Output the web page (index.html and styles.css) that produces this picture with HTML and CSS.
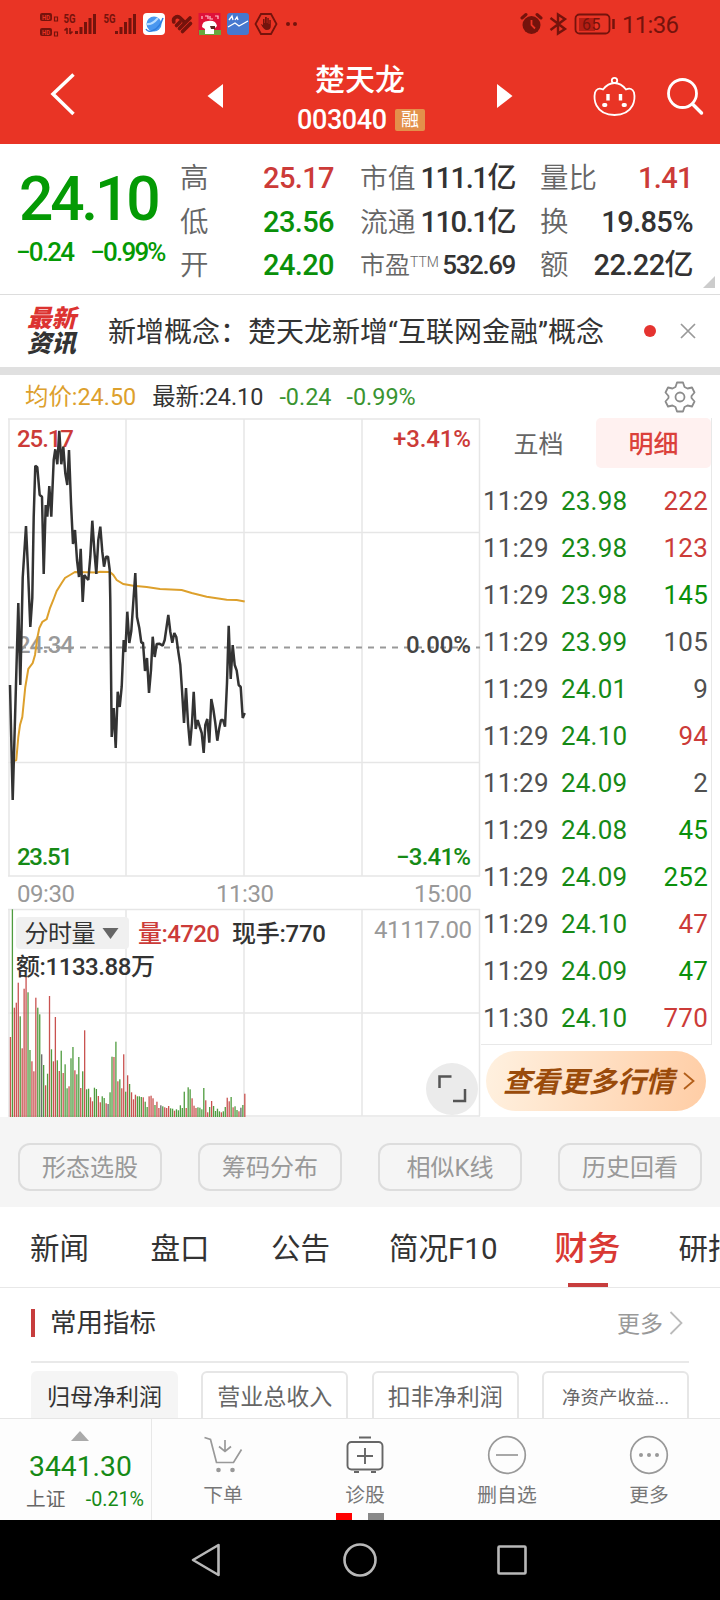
FILE: index.html
```
<!DOCTYPE html>
<html lang="zh-CN">
<head>
  <meta charset="UTF-8">
  <meta name="viewport" content="width=device-width, initial-scale=1.0">
  <title>楚天龙 003040</title>
  <link rel="stylesheet" href="styles.css">
</head>
<body>
  <header class="top">
    <div class="status">
      <svg width="310" height="48" viewBox="0 0 310 48" fill="#75130c">
        <g>
          <rect x="40" y="13" width="12" height="8" rx="2"/>
          <rect x="40" y="28" width="12" height="8" rx="2"/>
        </g>
        <path d="M54.500 17h3v4h-3zM54.500 32h3v4h-3z" fill="none" stroke="#75130c" stroke-width="1.200"/>
        <text x="42" y="19.500" class="hd" textLength="8" lengthAdjust="spacingAndGlyphs">HD</text>
        <text x="42" y="34.500" class="hd" textLength="8" lengthAdjust="spacingAndGlyphs">HD</text>
        <text x="63.500" y="23" class="net" textLength="12" lengthAdjust="spacingAndGlyphs">5G</text>
        <text x="103.500" y="23" class="net" textLength="12" lengthAdjust="spacingAndGlyphs">5G</text>
        <path d="M67 28v6M64.500 30.500l2.500-2.500M70 28v6M70 34l2.500-2.500" stroke="#75130c" stroke-width="1.600"/>
        <path d="M75 31h3v3h-3zM79.500 27h3v7h-3zM84 22h3v12h-3zM88.500 18h3v16h-3zM93 14h3v20h-3z"/>
        <path d="M115 31h3v3h-3zM119.500 27h3v7h-3zM124 22h3v12h-3zM128.500 18h3v16h-3zM133 14h3v20h-3z"/>
        <rect x="143" y="13" width="22" height="22" rx="4" fill="#fff"/>
        <circle cx="154" cy="24" r="7.500" fill="#4a97ef"/>
        <path d="M146 29q2 4 8 1t9-12" fill="none" stroke="#2e7ddf" stroke-width="1.500"/>
        <path d="M147 24q5 1 11-6" fill="none" stroke="#b5dcff" stroke-width="2"/>
        <g fill="none" stroke="#75130c" stroke-width="3.600" stroke-linecap="round">
          <path d="M173.800 22q-1-3.500 2-5 2.500-1 4.500 1l4.500 4.500"/>
          <path d="M176.500 25.500l3.500-3.500M179.500 28.500l10.500-10.500M182.500 31.500l8-8"/>
        </g>
        <rect x="198.500" y="13" width="22" height="22" fill="#df1239"/>
        <path d="M199 30h22v5h-22z" fill="#67a83d"/>
        <path d="M202 16v3M205 16h3v3M210 16v3h3M215 16h3v3" fill="none" stroke="#ffc4cf" stroke-width="1.200"/>
        <path d="M202 27q0-6 6-6 8-1 9 5l-3 3v5h-9v-5z" fill="#fff"/>
        <path d="M210 26h5v3h-4z" fill="#5b2622"/>
        <rect x="227" y="13" width="22" height="22" rx="3" fill="#4678cf"/>
        <path d="M228 27l7-4 4 3 9-5" fill="none" stroke="#fff" stroke-width="1.300"/>
        <path d="M229 20l3-4 1 4M235 20l2-3 1 3" fill="none" stroke="#fff" stroke-width="1.300"/>
        <path d="M261 14h10l5.500 10-5.500 10h-10l-5.500-10z" fill="none" stroke="#75130c" stroke-width="1.800"/>
        <path d="M261 24l2 1v-6h1.500v4h.500v-6h1.800v6h.500v-5h1.500v6h.500v-4h1.500v6q0 4-4 4-3 0-6-6z"/>
        <circle cx="288" cy="24" r="2"/><circle cx="295" cy="24" r="2"/>
      </svg>
      <svg width="200" height="48" viewBox="520 0 200 48" fill="#75130c">
        <circle cx="531.500" cy="25" r="9"/>
        <path d="M522 18l4-3.500M537 14.500l4 3.500" stroke="#75130c" stroke-width="3" stroke-linecap="round"/>
        <path d="M531.500 20v5l3.500 3.500" fill="none" stroke="#e93425" stroke-width="1.800"/>
        <path d="M550.500 18l14.500 11-7 4.500V14.500l7 4.500-14.500 11" fill="none" stroke="#75130c" stroke-width="2.400"/>
        <rect x="579" y="18" width="16" height="13" fill="#b51e14"/>
        <rect x="575.500" y="14.500" width="34" height="19" rx="4" fill="none" stroke="#75130c" stroke-width="1.800"/>
        <path d="M613.500 19v10" stroke="#75130c" stroke-width="2.500"/>
        <text x="582" y="29.500" class="batt">65</text>
        <text x="622" y="33" class="clock" textLength="57">11:36</text>
      </svg>
    </div>
    <div class="titlebar">
      <svg class="tb-left" width="270" height="96" viewBox="0 48 270 96">
        <path d="M73.500 74.500L53 94l20.500 20" fill="none" stroke="#fff" stroke-width="3.500"/>
        <path d="M223 84v24l-15.500-12z" fill="#fff"/>
      </svg>
      <div class="stock">
        <div class="stock-name">楚天龙</div>
        <div class="stock-code"><span>003040</span><span class="tag">融</span></div>
      </div>
      <svg class="tb-right" width="270" height="96" viewBox="450 48 270 96">
        <path d="M497 84v24l15.500-12z" fill="#fff"/>
        <g fill="none" stroke="#fff" stroke-width="1.800">
          <circle cx="614.500" cy="80.500" r="2.700"/>
          <path d="M603 89.500q5-6.500 11.500-6.500t11.500 6.500q6-2.500 8 3 1.500 7-1.500 13-5 9.500-18 9.500t-18-9.500q-3-6-1.500-13 2-5.500 8-3z"/>
        </g>
        <path d="M608 94v6.500M620.500 94v6.500" stroke="#fff" stroke-width="3.400"/>
        <path d="M604 105h1.500M623.500 105h1.500" stroke="#fff" stroke-width="3.800" stroke-linecap="round"/>
        <circle cx="682.500" cy="93.500" r="14" fill="none" stroke="#fff" stroke-width="2.800"/>
        <path d="M692.500 104l9 9" stroke="#fff" stroke-width="3.500" stroke-linecap="round"/>
      </svg>
    </div>
  </header>

  <section class="quote">
    <div class="now">
      <div class="price">24.10</div>
      <div class="change"><span>−0.24</span><span>−0.99%</span></div>
    </div>
    <dl class="facts col-a">
      <dt>高</dt><dd class="up">25.17</dd>
      <dt>低</dt><dd class="down">23.56</dd>
      <dt>开</dt><dd class="down">24.20</dd>
    </dl>
    <dl class="facts col-b">
      <dt>市值</dt><dd>111.1亿</dd>
      <dt>流通</dt><dd>110.1亿</dd>
      <dt class="pe">市盈<sup>TTM</sup></dt><dd class="pe">532.69</dd>
    </dl>
    <dl class="facts col-c">
      <dt>量比</dt><dd class="up">1.41</dd>
      <dt>换</dt><dd>19.85%</dd>
      <dt>额</dt><dd>22.22亿</dd>
    </dl>
    <i class="corner"></i>
  </section>

  <section class="news">
    <div class="news-logo"><b>最新</b><b>资讯</b></div>
    <p>新增概念：楚天龙新增“互联网金融”概念</p>
    <i class="dot"></i>
    <svg width="16" height="16" viewBox="0 0 16 16"><path d="M1 1l14 14M15 1L1 15" stroke="#999" stroke-width="1.700"/></svg>
  </section>

  <div class="legend">
    <span class="avg">均价:24.50</span>
    <span>最新:24.10</span>
    <span class="dn">-0.24</span>
    <span class="dn">-0.99%</span>
    <svg width="32" height="32" viewBox="-16 -16 32 32" fill="none" stroke="#8c8c8c" stroke-width="1.800" stroke-linejoin="round">
      <path d="M-3-14.500h6l1.500 4.500 3 1.500 4.500-1 2.500 5-3 3.500v2l3 3.500-2.500 5-4.500-1-3 1.500-1.500 4.500h-6l-1.500-4.500-3-1.500-4.500 1-2.500-5 3-3.500v-2l-3-3.500 2.500-5 4.500 1 3-1.500z"/>
      <circle r="4.500"/>
    </svg>
  </div>

  <main class="market">
    <div class="chart">
      <svg width="481" height="699" viewBox="0 0 481 699">
        <g stroke="#e6e6e6" stroke-width="1.500" fill="none">
          <path d="M8 1h472M8 114.500h472M8 344.500h472M8 458h472M8 491.500h472M8 595h472M8 698h472"/>
          <path d="M9 1v457M126 1v457M244 1v457M362 1v457M479.500 1v457M9 491v207M126 491v207M244 491v207M362 491v207M479.500 491v207"/>
        </g>
        <path d="M8 229.500h472" stroke="#999" stroke-width="1.800" stroke-dasharray="6 6"/>
        <g class="din">
          <text x="17" y="28.500" fill="#cc3b38" textLength="57">25.17</text>
          <text x="17" y="235" fill="#999" textLength="57">24.34</text>
          <text x="17" y="447" fill="#168a16" textLength="56">23.51</text>
          <text x="393" y="28.500" fill="#cc3b38" textLength="78">+3.41%</text>
          <text x="406" y="235" fill="#444" textLength="65">0.00%</text>
          <text x="396" y="447" fill="#168a16" textLength="75">−3.41%</text>
          <g class="axis">
            <text x="17" y="484" textLength="58">09:30</text>
            <text x="216" y="484" textLength="58">11:30</text>
            <text x="414" y="484" textLength="58">15:00</text>
            <text x="374" y="520" textLength="98">41117.00</text>
          </g>
        </g>
        <g id="bars"></g>
        <polyline fill="none" stroke="#dda02c" stroke-width="2" points="15,343 16.300,342 18.300,319 20,307 22.300,299 25.300,269 28.300,251 32.700,245 35,237 37.300,220 39.300,210 42.300,204 46.700,201 50,190 53.300,182 56.700,173 61.700,165 65,160 70,157 75,154 97,154.500 100,153.700 110,154 113.300,157 116.700,162 123.300,166 133.300,167.700 146.700,169 160,171 181.700,172 191.700,175 206.700,178.700 226.700,181.700 236.700,182 244.700,183.500"/>
        <polyline fill="none" stroke="#333" stroke-width="2.500" stroke-linejoin="bevel" points="10,267 12.700,382 18.300,185 20.300,267 22.700,160 26,108 28,152 30.300,209 32.300,180 33.700,99 35.300,47.700 37.300,49.300 39.700,77 42,78.700 43.700,156 45.700,87 47.300,98.700 49.300,68 51.300,98.700 53.700,42 55.300,31.300 57.300,46.300 59.300,12.700 61.300,46.300 63.300,28.700 65.300,55.300 67.300,67 69,32 71,85 73,126 75,112 77,142 79,159 80.700,130.700 82.700,184 84.300,157 86,159.300 88.300,162 90.300,138.700 92.300,102.700 94.300,132 96.300,156 98.300,122 100.300,108.700 102.300,133.700 104,148.700 106,138.700 108,138.700 109.700,152 110.300,182 111.700,319 113.700,290 115.700,330 117.700,273.700 119.700,289 121.700,268.700 123.700,222 125.300,234 127.300,193.700 129.300,225 131.300,213 135.300,155 137,199 139.300,210 141.300,224.700 143,224.700 145,253 147,240 149,275 151,252 152.700,218.700 154.700,239 156.700,226 159.300,225.700 162.700,227.700 164.700,222 168.300,197 170.300,213.700 172.300,224.700 174.300,215 176.300,219 178.300,233.700 180.300,247 182,272 184,305 186,270 188,305 190,327.700 192,305 193.700,273.700 195.700,311 197.700,302 199.700,308.700 201.700,315 203.700,335 205.300,307 207.300,301 209.300,324.700 211.300,281 213.300,291 215.300,305 217.300,322.700 219.300,310 221,302 223,302 225,308.700 227,265 228.700,207.700 230.700,261 232.700,227 234.700,247 236.700,252.700 238.700,267 240.700,269 242.700,300 244.700,295"/>
        <rect x="16" y="499" width="113" height="32" rx="4" fill="#f0f0f0"/>
        <path d="M102.500 510h16l-8 11z" fill="#666"/>
        <g class="din">
          <text x="24.500" y="524" fill="#333" class="plain" textLength="71">分时量</text>
          <text x="138" y="524" fill="#cc3b38" textLength="82">量:4720</text>
          <text x="232" y="524" fill="#333" textLength="94">现手:770</text>
          <text x="16" y="557" fill="#333" textLength="139">额:1133.88万</text>
        </g>
        <circle cx="452" cy="671" r="26" fill="#ebebeb"/>
        <path d="M439.500 670v-11.500h12M453 683h12v-12" fill="none" stroke="#555" stroke-width="2.500"/>
      </svg>
    </div>

    <aside class="side">
      <div class="ticks">
        <div class="side-tabs"><span>五档</span><span class="on">明细</span></div>
        <div id="tickList"></div>
      </div>
      <div class="more-quote"><span>查看更多行情</span><svg width="12" height="18" viewBox="0 0 12 18"><path d="M1 1l9.500 8L1 17" fill="none" stroke="#b35f1a" stroke-width="1.800"/></svg></div>
    </aside>
  </main>

  <div class="tools">
    <button>形态选股</button>
    <button>筹码分布</button>
    <button>相似K线</button>
    <button>历史回看</button>
  </div>

  <nav class="tabs">
    <span>新闻</span><span>盘口</span><span>公告</span><span>简况F10</span><span class="on">财务</span><span>研报</span>
  </nav>

  <section class="finance">
    <div class="fin-head">
      <h2>常用指标</h2>
      <span>更多</span>
      <svg width="14" height="24" viewBox="0 0 14 24"><path d="M1.500 1l11 11-11 11" fill="none" stroke="#bbb" stroke-width="1.800"/></svg>
    </div>
    <div class="chips">
      <span class="on">归母净利润</span><span>营业总收入</span><span>扣非净利润</span><span class="small">净资产收益...</span>
    </div>
  </section>

  <footer class="dock">
    <div class="index">
      <i class="caret"></i>
      <div class="index-value">3441.30</div>
      <div class="index-row"><span>上证</span><span class="pct">-0.21%</span></div>
    </div>
    <div class="action">
      <svg width="42" height="42" viewBox="-21 -21 42 42" fill="none" stroke="#999" stroke-width="1.700">
        <path d="M-18.500-17.500l6 2 6 23h17l8-13M2-15v12M-4-8.500l6 5 6-5"/>
        <g fill="#999" stroke="none"><circle cx="-4.500" cy="15" r="2.300"/><circle cx="9.500" cy="15" r="2.300"/></g>
      </svg>
      <span>下单</span>
    </div>
    <div class="action">
      <svg width="42" height="42" viewBox="-21 -21 42 42" fill="none" stroke="#666" stroke-width="1.900">
        <rect x="-17.500" y="-13" width="35" height="27.500" rx="4"/>
        <path d="M-6-17.500h12M0-7v16M-8 1h16M-11 17h5M6 17h5"/>
      </svg>
      <span>诊股</span>
    </div>
    <div class="action">
      <svg width="42" height="42" viewBox="-21 -21 42 42" fill="none" stroke="#999" stroke-width="1.700">
        <circle r="18.300"/><path d="M-11 0h22"/>
      </svg>
      <span>删自选</span>
    </div>
    <div class="action">
      <svg width="42" height="42" viewBox="-21 -21 42 42" fill="none" stroke="#999" stroke-width="1.700">
        <circle r="18.300"/>
        <g fill="#999" stroke="none"><circle cx="-8" r="2"/><circle r="2"/><circle cx="8" r="2"/></g>
      </svg>
      <span>更多</span>
    </div>
    <div class="pager"><i class="cur"></i><i></i></div>
  </footer>

  <div class="sysnav">
    <svg width="720" height="80" viewBox="0 0 720 80" fill="none" stroke="#b8b8b8" stroke-width="2.600" stroke-linejoin="round">
      <path d="M218.500 25v30L193 40z"/>
      <circle cx="360" cy="40" r="15.500"/>
      <rect x="498.500" y="26.500" width="27" height="27" rx="1"/>
    </svg>
  </div>

  <script src="script.js"></script>
</body>
</html>
```

FILE: styles.css
```
* {
  box-sizing: border-box;
}
body {
  margin: 0;
  width: 720px;
  height: 1600px;
  overflow: hidden;
  background: #fff;
  color: #333;
  font-family: Roboto, "Noto Sans CJK SC", sans-serif;
}
svg {
  display: block;
}
i {
  display: block;
}

/* header */
.top {
  height: 144px;
  background: #e93425;
  color: #fff;
}
.status {
  display: flex;
  justify-content: space-between;
  height: 48px;
}
.hd {
  fill: #e93425;
  font-size: 7px;
  font-weight: 700;
}
.net {
  font-size: 13px;
  font-weight: 700;
}
.batt {
  font-size: 16px;
  letter-spacing: 0.6px;
}
.clock {
  font-size: 24px;
}
.titlebar {
  display: flex;
  height: 96px;
}
.stock {
  width: 180px;
  padding-top: 14px;
  text-align: center;
}
.stock-name {
  font-size: 30px;
  line-height: 36px;
  font-weight: 500;
}
.stock-code {
  display: flex;
  align-items: center;
  height: 22px;
  margin-top: 11px;
  padding-left: 27px;
  font-size: 27px;
  font-weight: 500;
  letter-spacing: -0.4px;
}
.tag {
  width: 30px;
  height: 22px;
  margin-left: 8px;
  border-radius: 2px;
  background: #e3904b;
  font-size: 18px;
  line-height: 22px;
  font-weight: 400;
}

/* quote */
.quote {
  position: relative;
  display: flex;
  height: 151px;
  border-bottom: 1.5px solid #ddd;
}
.up {
  color: #cc3b38 !important;
}
.down {
  color: #0a900a !important;
}
.now {
  width: 180px;
  padding-left: 19px;
  color: #049a04;
}
.price {
  margin-top: 20px;
  font-size: 60.5px;
  line-height: 72px;
  font-weight: 500;
  letter-spacing: -3.2px;
}
.change {
  display: flex;
  gap: 17px;
  margin: 1px 0 0 -3px;
  font-size: 26px;
  line-height: 30px;
  font-weight: 500;
  letter-spacing: -1.8px;
  white-space: nowrap;
}
/* the label column has no width of its own, labels run out under the values */
.facts {
  display: grid;
  grid-template-columns: 0 1fr;
  grid-auto-rows: 43.5px;
  margin: 13px 0 0;
  line-height: 43.5px;
  white-space: nowrap;
}
.facts dt {
  color: #666;
  font-size: 28.5px;
  font-weight: 350;
}
.facts dd {
  margin: 0;
  text-align: right;
  color: #333;
  font-size: 29px;
  font-weight: 500;
  letter-spacing: -0.6px;
}
.col-a {
  width: 154px;
  margin-right: 26px;
}
.col-b {
  width: 155px;
  margin-right: 25px;
}
.col-b dt {
  font-size: 27.8px;
}
.facts.col-b dd {
  letter-spacing: -1.4px;
}
.col-c {
  width: 153px;
}
.facts dt.pe {
  font-size: 25px;
}
.facts dd.pe {
  font-size: 26px;
}
.pe sup {
  font-size: 14px;
  line-height: 0;
  vertical-align: 7px;
}
.corner {
  position: absolute;
  right: 5px;
  bottom: 6px;
  border-left: 12px solid transparent;
  border-bottom: 12px solid #ccc;
}

/* news */
.news {
  display: flex;
  align-items: center;
  height: 80px;
  padding: 0 24px 0 27px;
  border-bottom: 8px solid #e0e0e0;
}
.news-logo {
  width: 81px;
  color: #333;
}
.news-logo b {
  display: block;
  font-size: 24.5px;
  line-height: 25px;
  font-weight: 900;
  font-style: italic;
}
.news-logo b:first-child {
  color: #dc3331;
}
.news p {
  flex: 1;
  margin: 4px 0 0;
  font-size: 28px;
  line-height: 40px;
  white-space: nowrap;
}
.dot {
  width: 12px;
  height: 12px;
  margin-right: 24px;
  border-radius: 50%;
  background: #e53330;
}

/* chart */
.legend {
  display: flex;
  align-items: center;
  gap: 16px;
  height: 43px;
  padding: 1px 24px 0 25px;
  font-size: 23.4px;
  line-height: 34px;
}
.legend .avg {
  color: #dda02c;
}
.legend .dn {
  color: #3a9431;
}
.legend .dn + .dn {
  margin-left: -1px;
}
.legend svg {
  margin-left: auto;
}
.market {
  display: flex;
  height: 699px;
}
.chart {
  width: 481px;
}
.din {
  font-size: 24px;
  font-weight: 500;
}
.din .plain {
  font-weight: 400;
}
.axis {
  fill: #999;
  font-weight: 400;
}
.side {
  width: 239px;
}
.ticks {
  width: 231px;
  height: 627px;
  border: 1px solid #e8e8e8;
  border-top: 0;
  border-left: 0;
}
.side-tabs {
  display: flex;
  height: 60px;
  text-align: center;
  font-size: 25px;
  line-height: 54px;
  color: #666;
}
.side-tabs span {
  flex: 1;
  height: 50px;
}
.side-tabs .on {
  border-radius: 5px;
  background: #fff1f0;
  color: #db413b;
  font-weight: 500;
}
.tick {
  display: flex;
  height: 47px;
  padding: 0 3px 0 2px;
  font-size: 26px;
  line-height: 47px;
  letter-spacing: 0.2px;
  color: #505050;
}
.tick span {
  width: 78px;
}
.tick .p {
  color: #168a16;
}
.tick .v {
  flex: 1;
  text-align: right;
}
.more-quote {
  display: flex;
  align-items: center;
  justify-content: center;
  gap: 9px;
  width: 220px;
  height: 60px;
  margin: 6px 0 0 5px;
  padding-left: 6px;
  border-radius: 30px;
  background: linear-gradient(100deg, #fff1e0, #ffcda5);
  color: #9a4b0b;
  font-size: 28.5px;
  font-weight: 700;
  font-style: italic;
  white-space: nowrap;
}
.more-quote span {
  margin-top: -4px;
}

/* tools and tabs */
.tools {
  display: flex;
  gap: 36px;
  height: 90px;
  padding: 26px 18px 0;
  background: #f5f5f5;
}
.tools button {
  flex: 1;
  height: 48px;
  padding: 2px 0 0;
  border: 2px solid #ddd;
  border-radius: 12px;
  background: none;
  color: #999;
  font: 24px/42px Roboto, "Noto Sans CJK SC", sans-serif;
}
.tabs {
  display: flex;
  height: 81px;
  padding-left: 30px;
  border-bottom: 1px solid #e8e8e8;
  overflow: hidden;
  font-size: 29.5px;
  line-height: 84px;
  white-space: nowrap;
}
.tabs span {
  height: 80px;
  margin-right: 61.5px;
}
.tabs span:nth-child(3) {
  margin-right: 59px;
}
.tabs span:nth-child(4) {
  margin-right: 57px;
}
.tabs .on {
  position: relative;
  margin-right: 58px;
  color: #d93934;
  font-size: 33px;
  font-weight: 500;
}
.tabs .on::after {
  content: "";
  position: absolute;
  left: 13px;
  bottom: 0;
  width: 40px;
  height: 4px;
  background: #c73d3d;
}

/* finance */
.finance {
  height: 130px;
  padding: 0 31px;
  overflow: hidden;
}
.fin-head {
  display: flex;
  align-items: center;
  height: 75px;
  padding: 0 6px 4px 0;
  border-bottom: 2px solid #e9e9e9;
  color: #999;
  font-size: 23px;
}
.fin-head h2 {
  flex: 1;
  margin: 1px 0 0;
  padding-left: 15px;
  border-left: 4px solid #c73d3d;
  color: #333;
  font-size: 26.5px;
  line-height: 28px;
  font-weight: 400;
}
.fin-head span {
  margin-top: -2px;
}
.fin-head svg {
  margin-left: 6px;
}
.chips {
  display: flex;
  gap: 23.5px;
  padding-top: 8px;
}
.chips span {
  flex: 1;
  height: 60px;
  border: 2px solid #e6e6e6;
  border-radius: 6px;
  text-align: center;
  color: #666;
  font-size: 23px;
  line-height: 50px;
  white-space: nowrap;
}
.chips .on {
  border-color: #f5f5f5;
  background: #f5f5f5;
  color: #333;
}
.chips .small {
  font-size: 18.5px;
}

/* bottom dock */
.dock {
  position: relative;
  display: flex;
  height: 102px;
  border-top: 1px solid #e6e6e6;
  background: #fdfdfd;
}
.index {
  width: 152px;
  border-right: 1px solid #e8e8e8;
  color: #168a16;
}
.caret {
  width: 18px;
  margin: 12px 0 0 71px;
  border: 9px solid transparent;
  border-top: 0;
  border-bottom: 10px solid #aaa;
}
.index-value {
  margin: 9px 0 0 29px;
  font-size: 28.3px;
  line-height: 34px;
}
.index-row {
  display: flex;
  justify-content: space-between;
  padding: 1px 7px 0 26px;
  font-size: 19.7px;
  line-height: 30px;
}
.index-row span:first-child {
  color: #666;
}
.action {
  width: 142px;
  padding-top: 15px;
  color: #777;
  font-size: 19.8px;
  line-height: 40px;
  text-align: center;
}
.action svg {
  margin: 0 auto;
}
.pager {
  position: absolute;
  left: 336px;
  bottom: 0;
  display: flex;
  gap: 16px;
}
.pager i {
  width: 16px;
  height: 7px;
  background: #888;
}
.pager .cur {
  background: #f00;
}
.sysnav {
  height: 80px;
  background: #000;
}
```

FILE: script.js
```
// one entry per minute, r = up, g = down, k = flat
const volumes = "240r 623g 328r 343r 403r 302g 206r 385r 422r 374g 201g 167r 137r 358r 328g 308g 188k 156g 95r 130g 363r 203g 167r 300r 170g 138r 199g 132r 158g 86g 92r 176g 210g 140r 128g 180g 87r 137g 260r 83g 85g 59r 47r 88g 84g 63r 44r 62g 57g 41r 39k 74g 181g 180r 226g 107r 113g 86r 188r 76g 125r 99g 74r 53r 67r 62g 62g 60g 59r 46g 30g 62r 64r 56r 36g 46r 27r 35k 32g 29r 27r 33r 26g 25g 19r 23g 20g 35g 27g 76g 27r 89g 83g 56r 34r 27r 29g 28g 23g 87g 50r 14r 30g 48r 33g 18g 25g 17g 14r 17g 30g 58r 47r 60g 29r 32g 21g 17r 28k 36g 70r".split(" ");
const colors = { r: "#c95250", g: "#4f9c3f", k: "#666" };
const bars = document.getElementById("bars");

volumes.forEach((item, i) => {
  const h = parseInt(item) / 3;
  const bar = document.createElementNS("http://www.w3.org/2000/svg", "rect");
  bar.setAttribute("x", (9.8 + i * 1.953).toFixed(2));
  bar.setAttribute("y", (699 - h).toFixed(1));
  bar.setAttribute("width", 1.3);
  bar.setAttribute("height", h.toFixed(1));
  bar.setAttribute("fill", colors[item.slice(-1)]);
  bars.appendChild(bar);
});

const ticks = [
  ["11:29", "23.98", 222, "up"],
  ["11:29", "23.98", 123, "up"],
  ["11:29", "23.98", 145, "down"],
  ["11:29", "23.99", 105, ""],
  ["11:29", "24.01", 9, ""],
  ["11:29", "24.10", 94, "up"],
  ["11:29", "24.09", 2, ""],
  ["11:29", "24.08", 45, "down"],
  ["11:29", "24.09", 252, "down"],
  ["11:29", "24.10", 47, "up"],
  ["11:29", "24.09", 47, "down"],
  ["11:30", "24.10", 770, "up"]
];

document.getElementById("tickList").innerHTML = ticks.map(([time, price, vol, cls]) =>
  `<div class="tick"><span>${time}</span><span class="p">${price}</span><span class="v ${cls}">${vol}</span></div>`
).join("");
```
